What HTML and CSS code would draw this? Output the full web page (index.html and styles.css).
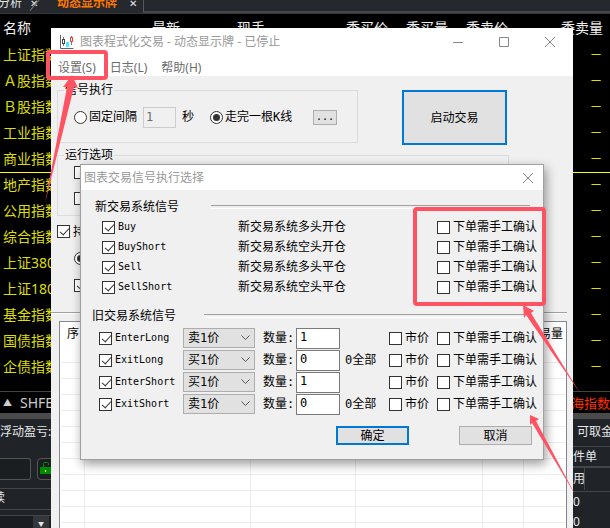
FILE: index.html
```html
<!DOCTYPE html>
<html lang="zh-CN">
<head>
	<meta charset="UTF-8">
	<title>图表程式化交易</title>
	<link rel="stylesheet" href="styles.css">
</head>
<body>

	<!-- 行情软件主界面 -->
	<div class="desktop">
		<div class="tabs">
			<span class="tab tab-first"><span>分析</span></span>
			<span class="tab-x">✕</span>
			<span class="tab-slash"></span>
			<span class="tab ativo">动态显示牌</span>
			<span class="tab-x">✕</span>
			<span class="tab-rest"></span>
		</div>

		<table class="quotes">
			<colgroup>
				<col class="c-name"><col class="c-last"><col class="c-vol"><col class="c-bid"><col class="c-bidvol"><col class="c-ask"><col>
			</colgroup>
			<tr><th>名称</th><th>最新</th><th>现手</th><th>委买价</th><th>委买量</th><th>委卖价</th><th class="last">委卖量</th></tr>
			<tr><td>上证指数</td><td colspan="6" class="dash">—</td></tr>
			<tr><td>Ａ股指数</td><td colspan="6" class="dash">—</td></tr>
			<tr><td>Ｂ股指数</td><td colspan="6" class="dash">—</td></tr>
			<tr><td>工业指数</td><td colspan="6" class="dash">—</td></tr>
			<tr class="current"><td>商业指数</td><td colspan="6" class="dash">—</td></tr>
			<tr><td>地产指数</td><td colspan="6" class="dash">—</td></tr>
			<tr><td>公用指数</td><td colspan="6" class="dash">—</td></tr>
			<tr><td>综合指数</td><td colspan="6" class="dash">—</td></tr>
			<tr><td>上证380</td><td colspan="6" class="dash">—</td></tr>
			<tr><td>上证180</td><td colspan="6" class="dash">—</td></tr>
			<tr><td>基金指数</td><td colspan="6" class="dash">—</td></tr>
			<tr><td>国债指数</td><td colspan="6" class="dash">—</td></tr>
			<tr><td>企债指数</td><td colspan="6" class="dash">—</td></tr>
		</table>

		<div class="markets">
			<span class="up">▲</span>
			<span class="shfe">SHFE</span>
			<span class="index">海指数</span>
		</div>

		<div class="account">
			<div class="acc-left">
				<div class="acc-title">浮动盈亏:</div>
				<div class="acc-lock">
					<input type="text" class="acc-input" aria-label="合约">
					<button class="lock" aria-label="锁定">
						<svg width="12" height="14" viewBox="0 0 12 14"><path d="M3.5 6V2.500q0-1 1-1h3q1 0 1 1V4" fill="none" stroke="#008a00"/><rect x="0" y="6" width="12" height="7" fill="#008a00"/><rect x="5" y="9" width="1" height="2" fill="#ffff00"/></svg>
					</button>
				</div>
				<div class="acc-cont"><span>续</span></div>
				<div class="acc-drop"><span>▼</span></div>
			</div>
			<div class="acc-right">
				<div class="acc-title">可取金</div>
				<div class="acc-cond">件单</div>
				<div class="acc-use"><span>用</span></div>
				<div class="acc-num">0</div>
				<div class="acc-num">0</div>
			</div>
		</div>
	</div>

	<!-- 窗口:程式化交易 -->
	<div class="window main-window">
		<div class="titlebar">
			<svg class="logo" width="15" height="15" viewBox="0 0 15 15"><path d="M1.500 0v13.500h13" fill="none" stroke="#666666"/><path d="M4.500 2v9M12.500 1v9" stroke="#777777"/><rect x="3.500" y="4.500" width="2" height="4" fill="#ffffff" stroke="#444444"/><rect x="7" y="7" width="3" height="5" fill="#3cf0ff"/><rect x="11.500" y="2.500" width="2" height="4" fill="#ffffff" stroke="#f04040"/></svg>
			<span class="title">图表程式化交易 - 动态显示牌 - 已停止</span>
			<button class="win-btn" aria-label="最小化"><svg width="10" height="10" viewBox="0 0 10 10"><path d="M0 5.5h10"/></svg></button>
			<button class="win-btn" aria-label="最大化"><svg width="10" height="10" viewBox="0 0 10 10"><path d="M.5.5h9v9h-9z"/></svg></button>
			<button class="win-btn" aria-label="关闭"><svg width="10" height="10" viewBox="0 0 10 10"><path d="M0 0l10 10M10 0L0 10"/></svg></button>
		</div>
		<div class="menu">
			<a href="#">设置(S)</a>
			<a href="#">日志(L)</a>
			<a href="#">帮助(H)</a>
		</div>
		<div class="main-body">
			<div class="top-row">
				<fieldset class="group exec">
					<legend>信号执行</legend>
					<label><input type="radio" name="modo">固定间隔</label>
					<input type="text" class="seconds" value="1" aria-label="间隔秒数" disabled>
					<span class="sec">秒</span>
					<label><input type="radio" name="modo" checked>走完一根K线</label>
					<button class="btn dots">...</button>
				</fieldset>
				<button class="btn start">启动交易</button>
			</div>
			<fieldset class="group options">
				<legend>运行选项</legend>
				<label><input type="checkbox" aria-label="运行选项一"></label>
				<label><input type="checkbox" aria-label="运行选项二"></label>
			</fieldset>
			<div class="hold">
				<label><input type="checkbox" checked>持</label>
				<label class="indent"><input type="radio" name="pos" aria-label="持仓方式" checked></label>
				<label class="indent"><input type="checkbox" aria-label="持仓选项" checked></label>
			</div>
			<div class="rule"></div>
			<div class="list">
				<table>
					<colgroup><col class="l-1"><col class="l-2"><col class="l-3"><col class="l-4"><col class="l-5"><col></colgroup>
					<tr><th>序</th><th></th><th></th><th></th><th></th><th class="last">易量</th></tr>
					<tr><td></td><td></td><td></td><td></td><td></td><td></td></tr>
					<tr><td></td><td></td><td></td><td></td><td></td><td></td></tr>
					<tr><td></td><td></td><td></td><td></td><td></td><td></td></tr>
					<tr><td></td><td></td><td></td><td></td><td></td><td></td></tr>
					<tr><td></td><td></td><td></td><td></td><td></td><td></td></tr>
					<tr><td></td><td></td><td></td><td></td><td></td><td></td></tr>
					<tr><td></td><td></td><td></td><td></td><td></td><td></td></tr>
					<tr><td></td><td></td><td></td><td></td><td></td><td></td></tr>
					<tr><td></td><td></td><td></td><td></td><td></td><td></td></tr>
					<tr><td></td><td></td><td></td><td></td><td></td><td></td></tr>
					<tr><td></td><td></td><td></td><td></td><td></td><td></td></tr>
					<tr><td></td><td></td><td></td><td></td><td></td><td></td></tr>
				</table>
			</div>
		</div>
	</div>

	<!-- 对话框:信号执行选择 -->
	<div class="window dialog">
		<div class="titlebar">
			<span class="title">图表交易信号执行选择</span>
			<button class="win-btn" aria-label="关闭"><svg width="10" height="10" viewBox="0 0 10 10"><path d="M0 0l10 10M10 0L0 10"/></svg></button>
		</div>
		<div class="dialog-body">
			<div class="heading">新交易系统信号</div>
			<div class="signals">
				<label><input type="checkbox" checked>Buy</label>
				<span>新交易系统多头开仓</span>
				<label><input type="checkbox">下单需手工确认</label>

				<label><input type="checkbox" checked>BuyShort</label>
				<span>新交易系统空头开仓</span>
				<label><input type="checkbox">下单需手工确认</label>

				<label><input type="checkbox" checked>Sell</label>
				<span>新交易系统多头平仓</span>
				<label><input type="checkbox">下单需手工确认</label>

				<label><input type="checkbox" checked>SellShort</label>
				<span>新交易系统空头平仓</span>
				<label><input type="checkbox">下单需手工确认</label>
			</div>

			<div class="heading old">旧交易系统信号</div>
			<div class="signals-old">
				<label><input type="checkbox" checked>EnterLong</label>
				<select aria-label="EnterLong 价格"><option>卖1价</option><option>买1价</option></select>
				<label for="q1">数量:</label>
				<input type="text" id="q1" value="1">
				<span></span>
				<label><input type="checkbox">市价</label>
				<label><input type="checkbox">下单需手工确认</label>

				<label><input type="checkbox" checked>ExitLong</label>
				<select aria-label="ExitLong 价格"><option>买1价</option><option>卖1价</option></select>
				<label for="q2">数量:</label>
				<input type="text" id="q2" value="0">
				<span>0全部</span>
				<label><input type="checkbox">市价</label>
				<label><input type="checkbox">下单需手工确认</label>

				<label><input type="checkbox" checked>EnterShort</label>
				<select aria-label="EnterShort 价格"><option>买1价</option><option>卖1价</option></select>
				<label for="q3">数量:</label>
				<input type="text" id="q3" value="1">
				<span></span>
				<label><input type="checkbox">市价</label>
				<label><input type="checkbox">下单需手工确认</label>

				<label><input type="checkbox" checked>ExitShort</label>
				<select aria-label="ExitShort 价格"><option>卖1价</option><option>买1价</option></select>
				<label for="q4">数量:</label>
				<input type="text" id="q4" value="0">
				<span>0全部</span>
				<label><input type="checkbox">市价</label>
				<label><input type="checkbox">下单需手工确认</label>
			</div>

			<div class="buttons">
				<button class="btn ok">确定</button>
				<button class="btn">取消</button>
			</div>
		</div>
	</div>

	<!-- 红框和箭头 -->
	<svg class="marks" width="610" height="528" viewBox="0 0 610 528">
		<rect x="48" y="52" width="58" height="26" rx="2"/>
		<rect x="415" y="209" width="129" height="95" rx="2"/>
		<path d="M72 75L78 88L74 87L45 203L67 87L63 87Z"/>
		<path d="M523 305L534 311L531 313L580 393L526 315L524 318Z"/>
		<path d="M530 415L539 419L536 421L576 496L532 423L530 425Z"/>
	</svg>

</body>
</html>
```
FILE: styles.css
```css
* {
	box-sizing: border-box;
}

body {
	margin: 0;
	height: 100vh;
	overflow: hidden;
	position: relative;
	background-color: #000000;
	font-family: "DejaVu Sans Mono", "Noto Sans CJK SC", monospace;
	font-size: 12px;
	line-height: 16px;
}

button, input, select {
	font: inherit;
	margin: 0;
	padding: 0;
}

table {
	width: 100%;
	table-layout: fixed;
	border-collapse: collapse;
}

th, td {
	padding: 0;
	font-weight: normal;
	text-align: left;
	white-space: nowrap;
}

/* Interface de fundo */
.desktop {
	font-family: "Noto Sans", "Noto Sans CJK SC", sans-serif;
	color: #e6e6e6;
}

.tabs {
	display: flex;
	align-items: flex-end;
	height: 14px;
	overflow: hidden;
	background-color: #25282c;
	border-bottom: 1px solid #34373a;
}

.tab {
	line-height: 20px;
	white-space: nowrap;
}

.tab-first {
	width: 22px;
	display: flex;
	justify-content: flex-end;
}

.tab.ativo {
	color: #ff7800;
	font-weight: bold;
}

.tab-x {
	width: 16px;
	margin-left: 4px;
	font-size: 10px;
	line-height: 20px;
	text-align: center;
}

.tabs .ativo + .tab-x {
	margin-left: 8px;
}

.tab-slash {
	width: 1px;
	height: 20px;
	margin: 0 20px 0 -6px;
	background-color: #777777;
	transform: rotate(40deg);
}

.tab-rest {
	flex: 1;
	height: 14px;
	margin-left: 2px;
	border-left: 1px solid #55585c;
	border-bottom: 2px solid #44474a;
}

.quotes {
	color: #dede00;
	font-size: 14px;
	line-height: 20px;
}

.quotes .c-name { width: 152px; }
.quotes .c-last { width: 85px; }
.quotes .c-vol { width: 109px; }
.quotes .c-bid,
.quotes .c-bidvol { width: 60px; }
.quotes .c-ask { width: 80px; }

.quotes th {
	height: 28px;
	color: #f0f0f0;
}

.quotes td {
	height: 26px;
}

.quotes th:first-child,
.quotes td:first-child {
	padding-left: 3px;
}

.quotes .last {
	text-align: right;
	padding-right: 7px;
}

.quotes .dash {
	text-align: right;
	font-size: 10px;
	line-height: 16px;
	padding-right: 9px;
	padding-bottom: 4px;
}

.quotes .current td {
	border-bottom: 1px solid #ffff00;
}

.markets {
	display: flex;
	align-items: center;
	height: 22px;
	margin-top: 11px;
	border-top: 1px solid #444444;
	font-size: 14px;
	color: #cccccc;
}

.markets .up {
	width: 20px;
	padding-left: 3px;
	font-size: 9px;
}

.markets .index {
	margin-left: auto;
	font-size: 13px;
	color: #ff3000;
}

.account {
	display: flex;
	justify-content: space-between;
	height: 120px;
	background-color: #202428;
	border-top: 6px solid #4a4a4a;
	white-space: nowrap;
}

.acc-left {
	width: 60px;
}

.acc-right {
	width: 37px;
}

.acc-title {
	height: 28px;
	line-height: 26px;
}

.acc-right .acc-title {
	padding-left: 4px;
	border-bottom: 1px solid #44474a;
}

.acc-lock {
	display: flex;
	gap: 6px;
	height: 42px;
	padding-top: 11px;
	border-bottom: 1px solid #44474a;
}

.acc-input {
	width: 31px;
	height: 22px;
	background-color: #1a1e21;
	border: 1px solid #555555;
	border-left: 0;
	border-radius: 0 3px 3px 0;
}

.lock {
	display: flex;
	width: 22px;
	height: 22px;
	padding: 2px;
	background-color: #1a1e21;
	border: 1px solid #555555;
	border-radius: 4px;
}

.acc-cont {
	display: flex;
	height: 21px;
	border-bottom: 1px solid #44474a;
}

.acc-cont span {
	width: 5px;
	display: flex;
	justify-content: flex-end;
	line-height: 18px;
}

.acc-drop {
	height: 24px;
	margin-top: 5px;
	border-top: 1px solid #44474a;
	background-color: #1a1e21;
}

.acc-drop span {
	display: block;
	width: 16px;
	margin-left: 33px;
	background-color: #33363a;
	font-size: 6px;
	text-align: center;
}

.acc-cond {
	height: 21px;
	line-height: 20px;
	border-bottom: 2px solid #44474a;
}

.acc-use {
	height: 24px;
	line-height: 22px;
	border-bottom: 1px solid #44474a;
}

.acc-use span {
	display: block;
	width: 12px;
	border-right: 1px solid #44474a;
}

.acc-num {
	height: 20px;
	line-height: 20px;
}

/* Janelas */
.window {
	position: absolute;
	color: #000000;
	background-color: #f0f0f0;
}

.titlebar {
	display: flex;
	align-items: center;
	background-color: #ffffff;
	font-family: "Noto Sans", "Noto Sans CJK SC", sans-serif;
	color: #999999;
}

.titlebar .title {
	flex: 1;
	white-space: nowrap;
}

.win-btn {
	display: flex;
	align-items: center;
	justify-content: center;
	width: 30px;
	height: 24px;
	border: 0;
	background: none;
}

.win-btn svg {
	fill: none;
	stroke: #888888;
}

.main-window {
	top: 28px;
	left: 51px;
	right: 37px;
	bottom: 0;
	overflow: hidden;
}

.main-window .titlebar {
	height: 28px;
	padding-left: 8px;
	padding-right: 8px;
}

.main-window .title {
	padding-left: 6px;
}

.main-window .win-btn + .win-btn {
	margin-left: 16px;
}

.menu {
	display: flex;
	gap: 14px;
	height: 20px;
	padding-left: 7px;
	background-color: #ffffff;
	font-family: "Noto Sans", "Noto Sans CJK SC", sans-serif;
	line-height: 24px;
}

.menu a {
	color: #6d6d6d;
	text-decoration: none;
}

.main-body {
	padding: 6px 6px 0;
}

.group {
	position: relative;
	margin: 0;
	padding: 0 16px;
	border: 1px solid #dcdcdc;
	min-width: 0;
}

.group legend {
	height: 16px;
	margin-left: -10px;
	padding: 0 1px;
}

.top-row {
	display: flex;
	justify-content: space-between;
	padding-right: 60px;
}

.exec {
	display: flex;
	align-items: center;
	width: 301px;
	height: 61px;
	padding-bottom: 6px;
}

.exec .seconds {
	width: 33px;
	height: 21px;
	margin-left: 6px;
	padding: 0 2px;
	border: 1px solid #cccccc;
	background-color: #f0f0f0;
	color: #6d6d6d;
}

.exec .sec {
	width: 28px;
	margin-left: 6px;
}

.btn {
	height: 19px;
	color: #000000;
	background-color: #e1e1e1;
	border: 1px solid #adadad;
}

.exec .dots {
	width: 24px;
	height: 15px;
	margin-left: auto;
	margin-right: 4px;
	font-size: 10px;
	line-height: 12px;
}

.start {
	width: 105px;
	height: 55px;
	margin-top: 8px;
	border: 2px solid #0078d7;
}

.options {
	margin-top: 2px;
	margin-right: 58px;
	height: 69px;
}

.options label {
	height: 18px;
	margin-bottom: 8px;
}

label {
	display: flex;
	align-items: center;
	white-space: nowrap;
}

input[type="checkbox"],
input[type="radio"] {
	appearance: none;
	position: relative;
	flex: none;
	width: 13px;
	height: 13px;
	margin-right: 3px;
	border: 1px solid #333333;
	background-color: #ffffff;
}

input[type="radio"] {
	border-radius: 50%;
	margin-right: 2px;
}

input[type="checkbox"]:checked::before {
	content: "";
	position: absolute;
	left: 4px;
	top: 0;
	width: 4px;
	height: 8px;
	border: solid #333333;
	border-width: 0 1px 1px 0;
	transform: rotate(42deg);
}

input[type="radio"]:checked::before {
	content: "";
	position: absolute;
	left: 2px;
	top: 2px;
	width: 7px;
	height: 7px;
	border-radius: 50%;
	background-color: #333333;
}

.hold {
	padding-top: 2px;
}

.hold label {
	height: 27px;
}

.hold .indent {
	padding-left: 17px;
}

.rule {
	height: 2px;
	margin: 13px 0 7px -6px;
	border-top: 1px solid #a0a0a0;
	border-bottom: 1px solid #ffffff;
}

.list {
	margin: 0 0 0 2px;
	border: 1px solid #828790;
	background-color: #ffffff;
	padding: 0 1px;
}

.list th {
	height: 24px;
	padding-left: 6px;
}

.list .last {
	padding: 0 2px;
	text-align: right;
}

.list td {
	height: 16px;
	border: 1px solid #ececec;
	border-top: 0;
}

.list td:first-child { border-left: 0; }
.list td:last-child { border-right: 0; }
.list .l-1 { width: 23px; }
.list .l-2 { width: 166px; }
.list .l-3 { width: 105px; }
.list .l-4 { width: 127px; }
.list .l-5 { width: 41px; }

/* Caixa de diálogo */
.dialog {
	top: 164px;
	left: 80px;
	right: 66px;
	border: 1px solid #a0a0a0;
	box-shadow: 2px 4px 10px rgba(0,0,0,0.4);
}

.dialog .titlebar {
	height: 25px;
	padding-left: 3px;
}

.dialog-body {
	padding: 9px 4px 14px 11px;
}

.heading {
	display: flex;
	align-items: center;
	gap: 32px;
	height: 16px;
	padding: 0 9px 0 3px;
	white-space: nowrap;
}

.heading::after {
	content: "";
	flex: 1;
	height: 2px;
	border-top: 1px solid #a0a0a0;
	border-bottom: 1px solid #ffffff;
}

.heading.old {
	gap: 28px;
	margin-top: 11px;
	padding-left: 0;
}

.signals {
	display: grid;
	grid-template-columns: 136px 1fr 102px;
	grid-auto-rows: 20px;
	align-items: center;
	margin-top: 2px;
	padding-left: 10px;
}

.signals-old {
	display: grid;
	grid-template-columns: 84px 72px 41px 44px 1fr 48px 102px;
	grid-auto-rows: 22px;
	align-items: center;
	margin-top: 3px;
	padding-left: 7px;
}

/* Letras latinas com 6px de largura */
.signals label:nth-child(3n+1),
.signals-old label:nth-child(7n+1) {
	font-size: 10px;
}

.signals-old label[for] {
	padding-left: 8px;
}

.signals-old span {
	padding-left: 5px;
}

.signals-old select {
	appearance: none;
	height: 20px;
	padding-left: 4px;
	border: 1px solid #adadad;
	border-radius: 0;
	color: #000000;
	background: #e1e1e1 url("data:image/svg+xml,%3Csvg xmlns='http://www.w3.org/2000/svg' width='9' height='6'%3E%3Cpath d='M.5.5l4 4 4-4' fill='none' stroke='%23555555'/%3E%3C/svg%3E") no-repeat right 4px center;
}

.signals-old input[type="text"] {
	width: 44px;
	height: 21px;
	padding: 0 3px 3px;
	border: 1px solid #7a7a7a;
	background-color: #ffffff;
}

.buttons {
	display: flex;
	justify-content: flex-end;
	gap: 50px;
	margin-top: 11px;
	padding-right: 7px;
}

.buttons .btn {
	width: 73px;
	line-height: 14px;
}

.buttons .ok {
	border: 2px solid #0078d7;
}

/* Marcas por cima das janelas */
.marks {
	position: absolute;
	top: 0;
	left: 0;
	pointer-events: none;
}

.marks rect {
	fill: none;
	stroke: #ff5364;
	stroke-width: 4;
}

.marks path {
	fill: #ff5364;
}
```
